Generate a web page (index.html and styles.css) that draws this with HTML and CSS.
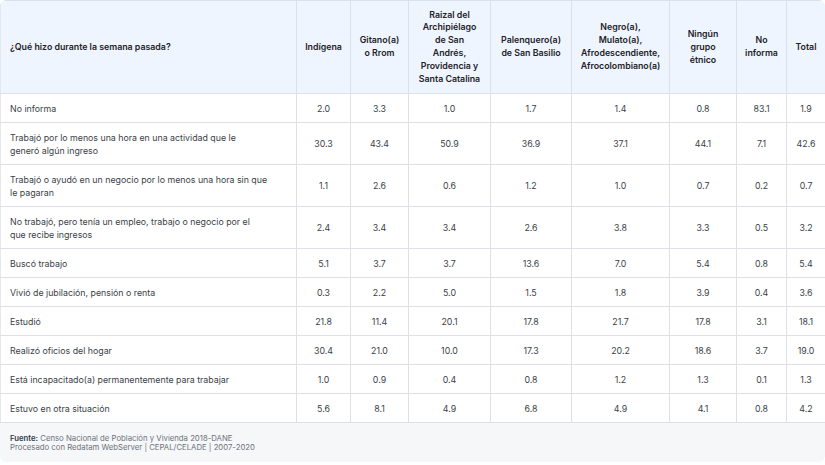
FILE: index.html
```html
<!DOCTYPE html>
<html lang="es">
<head>
<meta charset="utf-8">
<title>Tabla</title>
<link rel="stylesheet" href="styles.css">
</head>
<body>
<div class="card">
  <table class="data">
    <colgroup>
      <col class="c-label">
      <col class="c1"><col class="c2"><col class="c3"><col class="c4">
      <col class="c5"><col class="c6"><col class="c7"><col class="c8">
    </colgroup>
    <thead>
      <tr>
        <th class="lab">¿Qué hizo durante la semana pasada?</th>
        <th>Indígena</th>
        <th>Gitano(a) o Rrom</th>
        <th class="narrow">Raizal del Archipiélago de San Andrés, Providencia y Santa Catalina</th>
        <th>Palenquero(a) de San Basilio</th>
        <th>Negro(a), Mulato(a), Afrodescendiente, Afrocolombiano(a)</th>
        <th>Ningún grupo étnico</th>
        <th>No informa</th>
        <th>Total</th>
      </tr>
    </thead>
    <tbody>
      <tr><td class="lab">No informa</td><td>2.0</td><td>3.3</td><td>1.0</td><td>1.7</td><td>1.4</td><td>0.8</td><td>83.1</td><td>1.9</td></tr>
      <tr><td class="lab">Trabajó por lo menos una hora en una actividad que le generó algún ingreso</td><td>30.3</td><td>43.4</td><td>50.9</td><td>36.9</td><td>37.1</td><td>44.1</td><td>7.1</td><td>42.6</td></tr>
      <tr><td class="lab">Trabajó o ayudó en un negocio por lo menos una hora sin que le pagaran</td><td>1.1</td><td>2.6</td><td>0.6</td><td>1.2</td><td>1.0</td><td>0.7</td><td>0.2</td><td>0.7</td></tr>
      <tr><td class="lab">No trabajó, pero tenía un empleo, trabajo o negocio por el que recibe ingresos</td><td>2.4</td><td>3.4</td><td>3.4</td><td>2.6</td><td>3.8</td><td>3.3</td><td>0.5</td><td>3.2</td></tr>
      <tr><td class="lab">Buscó trabajo</td><td>5.1</td><td>3.7</td><td>3.7</td><td>13.6</td><td>7.0</td><td>5.4</td><td>0.8</td><td>5.4</td></tr>
      <tr><td class="lab">Vivió de jubilación, pensión o renta</td><td>0.3</td><td>2.2</td><td>5.0</td><td>1.5</td><td>1.8</td><td>3.9</td><td>0.4</td><td>3.6</td></tr>
      <tr><td class="lab">Estudió</td><td>21.8</td><td>11.4</td><td>20.1</td><td>17.8</td><td>21.7</td><td>17.8</td><td>3.1</td><td>18.1</td></tr>
      <tr><td class="lab">Realizó oficios del hogar</td><td>30.4</td><td>21.0</td><td>10.0</td><td>17.3</td><td>20.2</td><td>18.6</td><td>3.7</td><td>19.0</td></tr>
      <tr><td class="lab">Está incapacitado(a) permanentemente para trabajar</td><td>1.0</td><td>0.9</td><td>0.4</td><td>0.8</td><td>1.2</td><td>1.3</td><td>0.1</td><td>1.3</td></tr>
      <tr><td class="lab">Estuvo en otra situación</td><td>5.6</td><td>8.1</td><td>4.9</td><td>6.8</td><td>4.9</td><td>4.1</td><td>0.8</td><td>4.2</td></tr>
    </tbody>
  </table>
  <div class="foot">
    <p><strong>Fuente:</strong> Censo Nacional de Población y Vivienda 2018-DANE</p>
    <p>Procesado con Redatam WebServer | CEPAL/CELADE | 2007-2020</p>
  </div>
</div>
</body>
</html>
```

FILE: styles.css
```css
html, body {
  margin: 0;
  padding: 0;
  background: #ffffff;
}

body {
  font-family: Inter, "Noto Sans", "Liberation Sans", sans-serif;
  color: #333840;
}

.card {
  width: 825px;
  border-radius: 6px;
  overflow: hidden;
}

.data {
  width: 825px;
  border-collapse: collapse;
  table-layout: fixed;
  font-size: 8.8px;
}

.c-label { width: 296px; }
.c1 { width: 54px; }
.c2 { width: 58px; }
.c3 { width: 82px; }
.c4 { width: 81px; }
.c5 { width: 98px; }
.c6 { width: 67px; }
.c7 { width: 50px; }
.c8 { width: 39px; }

.data th,
.data td {
  border: 1px solid #dde1e7;
  text-align: center;
  vertical-align: middle;
  padding: 7.5px 6px;
  line-height: 13px;
}

.data th {
  background: #eef5fe;
  color: #1f2329;
  font-weight: 600;
  line-height: 12.9px;
  padding: 7.5px 8px;
}

.data th.narrow {
  padding-left: 9px;
  padding-right: 9px;
}

.data td {
  color: #3a3f47;
}

.data .lab {
  text-align: left;
  padding-left: 9px;
  padding-right: 28.5px;
}

.data tr > :first-child { border-left-color: #e4e7eb; }

.foot {
  background: #f6f7f9;
  padding: 11px 10px 10px;
  font-size: 7.75px;
  line-height: 9px;
  color: #6b717a;
  border-radius: 0 0 6px 6px;
}

.foot p {
  margin: 0;
}

.foot strong {
  color: #2e3a4a;
  font-weight: 600;
}
```
